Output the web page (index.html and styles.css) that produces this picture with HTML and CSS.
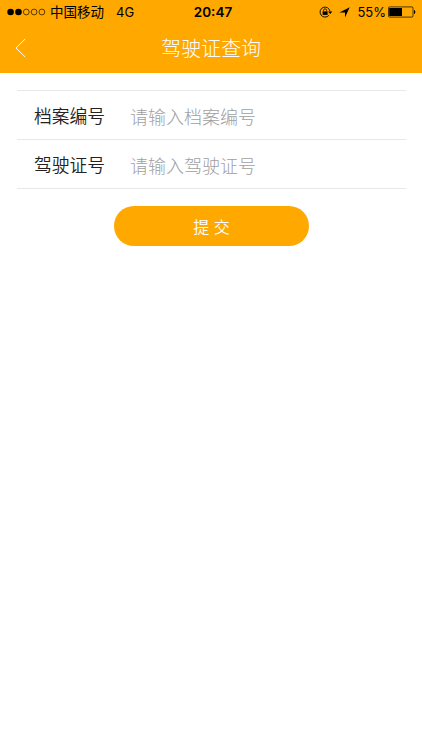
FILE: index.html
```html
<!DOCTYPE html>
<html lang="zh-CN">

<head>
    <meta charset="utf-8">
    <meta name="viewport" content="width=device-width, initial-scale=1">
    <title>驾驶证查询</title>
    <link rel="stylesheet" href="styles.css">
</head>

<body>
    <header class="header">
        <div class="status">
            <div class="status-left">
                <svg class="signal" width="39" height="8" viewBox="0 0 39 8">
                    <circle cx="3.6" cy="4" r="3.3" />
                    <circle cx="11.5" cy="4" r="3.3" />
                    <g fill="none" stroke="#000" stroke-width=".65">
                        <circle cx="19.3" cy="4" r="2.9" />
                        <circle cx="27.1" cy="4" r="2.9" />
                        <circle cx="34.9" cy="4" r="2.9" />
                    </g>
                </svg>
                <span class="carrier">中国移动</span>
                <span class="network">4G</span>
            </div>
            <div class="clock">20:47</div>
            <div class="status-right">
                <svg class="lock" width="14" height="12" viewBox="0 0 14 12">
                    <path d="M9.9 9.3A5 5 0 1 1 11 5.4" fill="none" stroke="#000" stroke-width=".9" />
                    <path d="M9 5.4h4.4L11.2 8z" />
                    <path d="M3.6 5.4h5v3.5h-5z" />
                    <path d="M4.6 5.5V4.3a1.5 1.5 0 0 1 3 0v1.2" fill="none" stroke="#000" stroke-width=".8" />
                </svg>
                <svg class="arrow" width="11" height="11" viewBox="0 0 11 11">
                    <path d="M10.7.3L6 10.6V5.4H.4z" />
                </svg>
                <span class="percent">55%</span>
                <svg class="battery" width="28" height="12" viewBox="0 0 28 12">
                    <rect x=".5" y=".9" width="24.5" height="10.2" rx="1.2" fill="none" stroke="#000" stroke-width=".7" />
                    <path d="M1.2 1.9h12.8v8.2H1.2zM26 4c1.8.4 1.8 3.6 0 4z" />
                </svg>
            </div>
        </div>
        <div class="navbar">
            <a class="back" href="#">
                <svg width="12" height="20" viewBox="0 0 12 20">
                    <path d="M10.2 1L1 10l9.2 9" fill="none" stroke="#fff" stroke-width="1" />
                </svg>
            </a>
            <h1 class="title">驾驶证查询</h1>
        </div>
    </header>

    <form class="form">
        <div class="row">
            <label class="label" for="fileNo">档案编号</label>
            <input class="input" id="fileNo" type="text" placeholder="请输入档案编号">
        </div>
        <div class="row">
            <label class="label" for="licenseNo">驾驶证号</label>
            <input class="input" id="licenseNo" type="text" placeholder="请输入驾驶证号">
        </div>
        <button class="submit" type="button">提 交</button>
    </form>
</body>

</html>
```
FILE: styles.css
```css
* {
    box-sizing: border-box;
}

body {
    margin: 0;
    background: #fff;
    color: #222;
    font-family: Inter, "Noto Sans CJK SC", sans-serif;
}

.header {
    height: 73px;
    background: #ffa800;
}

.status {
    display: grid;
    grid-template-columns: 1fr auto 1fr;
    align-items: center;
    height: 23px;
    padding: 0 6px 0 7px;
    color: #000;
    font-size: 13px;
    line-height: 23px;
}

.status-left,
.status-right {
    display: flex;
    align-items: center;
}

.status-right {
    justify-content: flex-end;
}

.carrier {
    margin: 0 12px 0 4px;
    padding-top: 1px;
    font-size: 13.5px;
}

.network,
.percent {
    padding-top: 1px;
}

.clock {
    padding-left: 3px;
    font-size: 13.5px;
    font-weight: 600;
}

.arrow {
    margin: 0 7px 0 6px;
}

.percent {
    margin-right: 2px;
    font-size: 13px;
}

.navbar {
    display: grid;
    grid-template-columns: 60px 1fr 60px;
    align-items: center;
    height: 50px;
}

.back {
    display: flex;
    padding-left: 15px;
}

.title {
    margin: 0;
    padding-top: 2px;
    color: #fff;
    font-size: 20px;
    font-weight: 300;
    line-height: 48px;
    text-align: center;
}

.form {
    margin: 17px 16px 0 17px;
    border-top: 1px solid #e8e8e8;
}

.row {
    display: flex;
    align-items: center;
    height: 49px;
    padding-left: 17px;
    border-bottom: 1px solid #e8e8e8;
}

.label {
    width: 96px;
    padding-bottom: 1px;
    font-size: 17.8px;
    font-weight: 350;
}

.input {
    flex: 1;
    min-width: 0;
    padding: 4px 0 0;
    border: 0;
    outline: none;
    background: none;
    font-family: inherit;
    font-size: 18px;
    font-weight: 300;
}

.input::placeholder {
    color: #a0a0a0;
}

.submit {
    display: block;
    width: 195px;
    height: 40px;
    margin: 17px auto 0;
    padding: 0;
    border: 0;
    border-radius: 20px;
    background: #ffa800;
    color: #fff;
    font-family: inherit;
    font-size: 16px;
    font-weight: 350;
}
```
